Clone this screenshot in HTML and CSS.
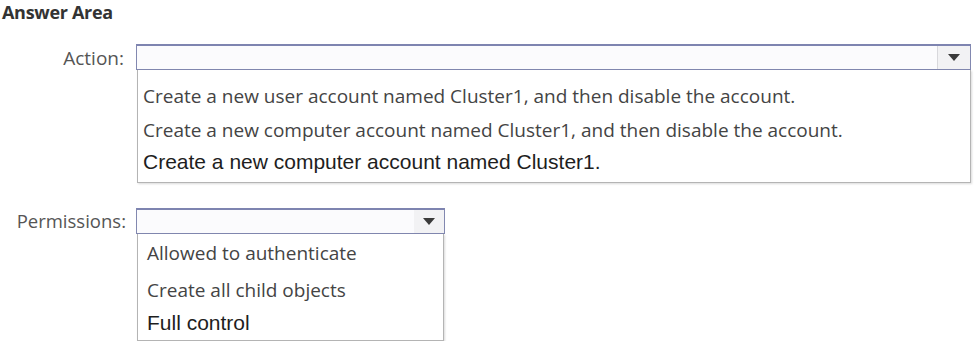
FILE: index.html
```html
<!DOCTYPE html>
<html lang="en">
<head>
    <meta charset="UTF-8">
    <title>Answer Area</title>
    <link rel="stylesheet" href="styles.css">
</head>
<body>
    <div class="answer-area">
        <h2 class="area-title">Answer Area</h2>

        <div class="field-row action-row">
            <div class="field-label">Action:</div>
            <div class="dropdown wide">
                <div class="dropdown-box">
                    <div class="dropdown-value"></div>
                    <div class="dropdown-arrow"><span class="triangle"></span></div>
                </div>
                <div class="dropdown-list">
                    <div class="option">Create a new user account named Cluster1, and then disable the account.</div>
                    <div class="option">Create a new computer account named Cluster1, and then disable the account.</div>
                    <div class="option plain">Create a new computer account named Cluster1.</div>
                </div>
            </div>
        </div>

        <div class="field-row perm-row">
            <div class="field-label">Permissions:</div>
            <div class="dropdown narrow">
                <div class="dropdown-box">
                    <div class="dropdown-value"></div>
                    <div class="dropdown-arrow"><span class="triangle"></span></div>
                </div>
                <div class="dropdown-list">
                    <div class="option">Allowed to authenticate</div>
                    <div class="option">Create all child objects</div>
                    <div class="option plain">Full control</div>
                </div>
            </div>
        </div>
    </div>
</body>
</html>
```

FILE: styles.css
```css
body {
    margin: 0;
    padding: 0;
    background-color: #fff;
    font-family: "Open Sans", "Noto Sans", sans-serif;
    color: #444;
}

.answer-area {
    padding: 1px 0 0 2px;
}

.area-title {
    margin: 0;
    font-size: 18px;
    font-weight: 700;
    color: #333;
    line-height: 22px;
    letter-spacing: -0.3px;
}

.field-row {
    display: flex;
    align-items: flex-start;
}

.action-row {
    margin-top: 21px;
}

.perm-row {
    margin-top: 25px;
}

.field-label {
    width: 124px;
    text-align: right;
    font-size: 18.5px;
    line-height: 26px;
    color: #555;
    margin-right: 10px;
}

.action-row .field-label {
    width: 122px;
    margin-right: 12px;
    font-size: 19px;
    line-height: 28px;
}

.dropdown.wide {
    width: 835px;
}

.dropdown.narrow {
    width: 309px;
}

.dropdown-box {
    display: flex;
    height: 23px;
    border: 1px solid #8288b0;
    border-top: 2px solid #7e84b0;
    background-color: #fbfbfd;
}

.dropdown-value {
    flex: 1;
}

.dropdown-arrow {
    width: 32px;
    border-left: 1px solid #d8d8dc;
    background-color: #f2f2f4;
    display: flex;
    align-items: center;
    justify-content: center;
}

.narrow .dropdown-arrow {
    width: 30px;
    border-left: none;
}

.triangle {
    width: 0;
    height: 0;
    border-left: 6px solid transparent;
    border-right: 6px solid transparent;
    border-top: 7px solid #3a3a3a;
}

.dropdown-list {
    border: 1px solid #b4b4b4;
    border-top: none;
    box-shadow: 1px 1px 2px rgba(0, 0, 0, 0.15);
    margin-left: 1px;
    padding: 8px 0 5px;
}

.option {
    padding-left: 5px;
    font-size: 19px;
    line-height: 36px;
    color: #444;
    white-space: nowrap;
}

.option + .option {
    line-height: 33px;
}

.option.plain {
    font-family: "Liberation Sans", Arial, sans-serif;
    font-size: 21px;
    line-height: 30px;
    color: #1e1e1e;
}

.narrow .dropdown-list {
    margin-left: 1px;
    width: 305px;
    padding: 1px 0 3px;
}

.narrow .option {
    padding-left: 9px;
    line-height: 36px;
}

.narrow .option + .option {
    line-height: 38px;
}

.narrow .option.plain {
    line-height: 28px;
}
```
